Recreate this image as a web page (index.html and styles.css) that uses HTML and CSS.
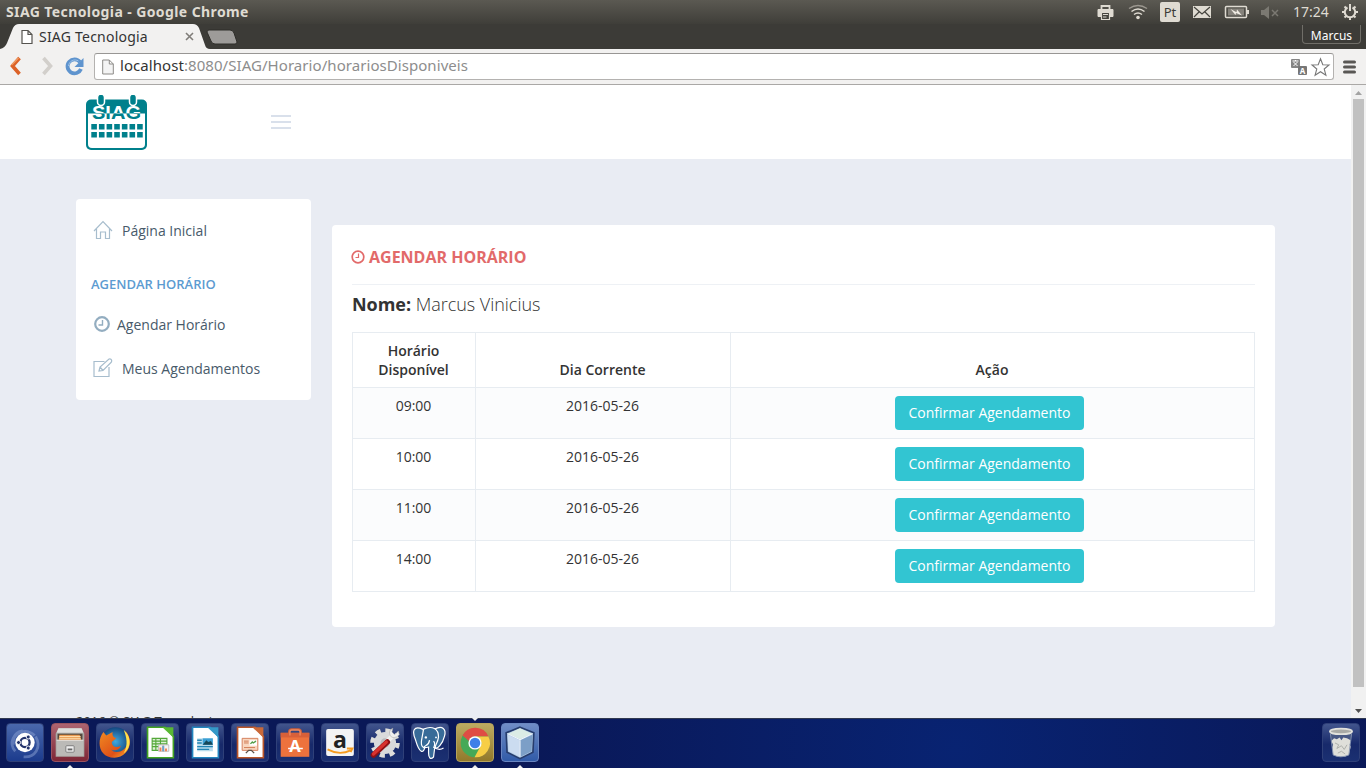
FILE: index.html
```html
<!DOCTYPE html>
<html lang="pt">
<head>
<meta charset="utf-8">
<title>SIAG Tecnologia</title>
<link rel="stylesheet" href="styles.css">
</head>
<body>
<header class="system-bar">
  <span class="window-title">SIAG Tecnologia - Google Chrome</span>
  <svg class="indicators" width="190" height="24" viewBox="0 0 190 24" fill="none" stroke="#dfdbd2" stroke-width="1.5">
    <path d="M6.500 9V6h8v3" stroke-width="1.800"/><path d="M3 9.500h15v7H3z" fill="#dfdbd2" stroke-width="1"/><path d="M6.500 12.500h8v7h-8z" fill="#45443e" stroke-width="1.200"/><path d="M8 14.500h5M8 17h3.500" stroke-width="1"/>
    <g transform="translate(0 .5)"><circle cx="43" cy="17" r="1.800" fill="#dfdbd2" stroke="none"/><path d="M39 14q4-3 8 0M36.500 11q6.500-5 13 0"/><path d="M34 8q9-6 18 0" stroke="#9b978f"/></g>
    <rect x="65" y="2" width="20" height="20" rx="2" fill="#dfdbd2" stroke="none"/><text class="lang" x="75" y="17" text-anchor="middle">Pt</text>
    <rect x="98" y="6" width="18" height="12" fill="#dfdbd2" stroke="none"/><path d="M99 7l8 7 8-7M99 17l5-5m11 5-5-5" stroke="#45443e" stroke-width="1.200"/>
    <rect x="130.500" y="6.500" width="21" height="11" rx="1"/><path d="M153 10v4" stroke-width="2"/><path d="M133 8.500h16v7h-16z" fill="#85827b" stroke="none"/><path d="m135.500 9 6 3.200.5-2.700 5 6-6-2.500-.5 2z" fill="#f0ece4" stroke="none"/>
    <path d="M166 10h3l5-4v13l-5-4h-3z" fill="#7b7972" stroke="none"/><path d="m177 10 6 6m0-6-6 6" stroke="#7b7972"/>
  </svg>
  <span class="clock">17:24</span>
  <svg class="gear" width="18" height="18" viewBox="0 0 18 18" fill="none" stroke="#dfdbd2" stroke-width="2"><path d="M6.500 4.500a5.200 5.200 0 1 0 5 0M9 1v7M1 9h3m10 0h3M3.500 3.500l2 2m9-2-2 2M3.500 14.500l2-2m9 2-2-2M9 14v3"/></svg>
</header>

<div class="tab-strip">
  <div class="tab">
    <svg class="tab-shape" width="211" height="25" viewBox="0 0 211 25"><path d="M0 25q5-1 7-6l6-15q2-4 6-4h174q4 0 6 4l6 17q1 4 5 4z" fill="#f2f1f0"/></svg>
    <div class="tab-content">
      <svg width="12" height="16" viewBox="0 0 12 16"><path d="M1 1.500h6l4 4v9H1zM7 1.500v4h4" fill="#fff" stroke="#55534f" stroke-width="1.200"/></svg>
      <span class="tab-title">SIAG Tecnologia</span>
      <svg class="tab-close" width="9" height="9" viewBox="0 0 9 9"><path d="m1 1 7 7m0-7L1 8" stroke="#807d79" stroke-width="1.600"/></svg>
    </div>
  </div>
  <svg class="new-tab" width="32" height="16" viewBox="0 0 32 16"><path d="M3 1h21q3 0 4 3l3 9q0 2-2 2H9q-3 0-4-3L1 3q0-2 2-2z" fill="#9d9b99" stroke="#2f2e2a"/></svg>
  <div class="profile">Marcus</div>
</div>

<div class="toolbar">
  <svg class="nav-buttons" width="94" height="35" viewBox="0 0 94 35" fill="none">
    <path d="m19.500 9-7 8 7 8" stroke="#dc6227" stroke-width="3.600"/><path d="m18.500 9-7 7" stroke="#f09b62" stroke-width="1.500"/>
    <path d="m43.500 9 7 8-7 8" stroke="#d2cfcb" stroke-width="3.600"/>
    <path d="M80 13A7 7 0 1 0 81 20" stroke="#5f94ce" stroke-width="3.800"/><path d="M83.500 9v9h-9z" fill="#5f94ce"/><path d="M78.500 12a6.500 6.500 0 0 0-10 5" stroke="#9dc1e8"/>
  </svg>
  <div class="omnibox">
    <svg width="12" height="16" viewBox="0 0 12 16"><path d="M.7 1h6.600l4 4v10H.7zM7.300 1v4h4" fill="#f4f4f4" stroke="#8c8a87"/></svg>
    <span class="url"><b>localhost</b>:8080/SIAG/Horario/horariosDisponiveis</span>
    <svg class="page-actions" width="42" height="20" viewBox="0 0 42 20">
      <rect x="1" y="2" width="9" height="9" rx="1" fill="#858585"/><path d="M2.500 4h6M5.500 3v1m-2 5 4-4m-4 0 4 4" stroke="#fff"/>
      <rect x="8" y="9" width="9" height="9" rx="1" fill="#777"/><text x="12.500" y="16.500" text-anchor="middle" class="translate-letter">A</text>
      <path d="m30.500 1.800 2.300 6 6.200.2-4.800 4 1.700 6.200-5.400-3.500-5.400 3.500 1.700-6.200-4.800-4 6.200-.2z" fill="#fff" stroke="#777" stroke-width="1.100"/>
    </svg>
  </div>
  <svg class="menu" width="13" height="14" viewBox="0 0 13 14"><path d="M1.500 2h10m-10 5h10m-10 5h10" stroke="#595754" stroke-width="3" stroke-linecap="round"/></svg>
</div>

<div class="viewport">
  <div class="page">
    <div class="page-header">
      <svg class="logo" width="62" height="57" viewBox="0 0 62 57">
        <defs><clipPath id="upper"><path d="M0 0h62v18.500H0z"/></clipPath><clipPath id="lower"><path d="M0 18.500h62V57H0z"/></clipPath></defs>
        <rect y="4.500" width="61" height="50.500" rx="5" fill="#00808c"/><path d="M2 18.500h57V49q0 4-4 4H6q-4 0-4-4z" fill="#fff"/>
        <g fill="#00808c" stroke="#fff" stroke-width="1.500"><rect x="11.500" y="-1" width="7" height="11.500" rx="3.500"/><rect x="43.500" y="-1" width="7" height="11.500" rx="3.500"/></g>
        <g class="logo-name" text-anchor="middle"><text x="30.500" y="23.500" textLength="49" lengthAdjust="spacingAndGlyphs" fill="#fff" clip-path="url(#upper)">SIAG</text><text x="30.500" y="23.500" textLength="49" lengthAdjust="spacingAndGlyphs" fill="#00808c" clip-path="url(#lower)">SIAG</text></g>
        <path d="M5.300 31.700h52M5.300 39.700h52" stroke="#00808c" stroke-width="5.600" stroke-dasharray="5.600 2.040"/>
      </svg>
      <div class="side-toggle"><i></i><i></i><i></i></div>
    </div>
    <main class="main">
      <nav class="sidebar">
        <a class="home"><svg width="20" height="20" viewBox="0 0 20 20" fill="none" stroke="#a7bdcd" stroke-width="1.200"><path d="m1 11 9-9.500 9 9.500M3.500 9v9.500h4V12h5v6.500h4V9"/></svg>Página Inicial</a>
        <h3>Agendar Horário</h3>
        <a class="schedule"><svg width="16" height="16" viewBox="0 0 16 16" fill="none" stroke="#93adc0"><circle cx="8" cy="8" r="6.800" stroke-width="2.200"/><path d="M8.500 4v5h-4" stroke-width="1.400"/></svg>Agendar Horário</a>
        <a class="mine"><svg width="20" height="20" viewBox="0 0 20 20" fill="none" stroke="#a7bdcd" stroke-width="1.200"><path d="M11.500 3.500H1v15h15V9M6 13l1-4 9-8q2-.5 2.500 1t-.5 2.500L10 12.500zM7 9l3 3.500"/></svg>Meus Agendamentos</a>
      </nav>
      <section class="portlet">
        <h2><svg width="14" height="14" viewBox="0 0 14 14" fill="none" stroke="#e26a6a"><circle cx="7" cy="7" r="5.800" stroke-width="1.700"/><path d="M7.500 3.500v4h-3" stroke-width="1.200"/></svg>Agendar Horário</h2>
        <p class="person"><b>Nome:</b> Marcus Vinicius</p>
        <table>
          <colgroup><col class="col-time"><col class="col-day"><col></colgroup>
          <thead><tr><th>Horário<br>Disponível</th><th>Dia Corrente</th><th>Ação</th></tr></thead>
          <tbody>
            <tr><td>09:00</td><td>2016-05-26</td><td><button>Confirmar Agendamento</button></td></tr>
            <tr><td>10:00</td><td>2016-05-26</td><td><button>Confirmar Agendamento</button></td></tr>
            <tr><td>11:00</td><td>2016-05-26</td><td><button>Confirmar Agendamento</button></td></tr>
            <tr><td>14:00</td><td>2016-05-26</td><td><button>Confirmar Agendamento</button></td></tr>
          </tbody>
        </table>
      </section>
    </main>
    <footer>2016 © SIAG Tecnologia</footer>
  </div>
  <div class="scrollbar">
    <svg width="15" height="14" viewBox="0 0 15 14"><path d="m4 10 3.500-4 3.500 4z" fill="#a3a3a3"/></svg>
    <div class="thumb"></div>
    <svg width="15" height="14" viewBox="0 0 15 14"><path d="m4 5 3.500 4L11 5z" fill="#505050"/></svg>
  </div>
</div>

<footer class="launcher">
  <div class="tile dash"><svg viewBox="0 0 39 39" fill="none"><path d="M7 22C5 9 20 3 30 12M31 13c7 12-1 23-13 22M9 29C1 20 8 8 17 7" stroke="#8ba2d4" stroke-width="3" opacity=".5"/><circle cx="19.500" cy="19.500" r="10.500" fill="#fff"/><circle cx="19.500" cy="19.500" r="5" stroke="#23336b" stroke-width="2.500"/><g fill="#23336b" stroke="#fff"><circle cx="12.500" cy="19.500" r="2.200"/><circle cx="23" cy="13.500" r="2.200"/><circle cx="23" cy="25.500" r="2.200"/></g></svg></div>
  <div class="tile files running"><svg viewBox="0 0 39 39"><path d="M7 4h25l3 6v25H4V10z" fill="#aaa9a5"/><path d="M7 4h25l2 5H5z" fill="#dededb"/><path d="M6 10h27v8H6z" fill="#55483d"/><path d="M8 11h22l2 7H7z" fill="#e99a50"/><path d="M8 13h23M8 15h23" stroke="#ffe0af"/><path d="M5 17h29v17H5z" fill="#bbbab7"/><path d="M5 17h29" stroke="#eee"/><rect x="15" y="23" width="9" height="7" rx="1" fill="#eee" stroke="#777"/><path d="M17 26h5v2h-5z" fill="#666"/></svg></div>
  <div class="tile"><svg viewBox="0 0 39 39"><defs><radialGradient id="globe"><stop stop-color="#40a9df"/><stop offset="1" stop-color="#14477f"/></radialGradient><linearGradient id="fox" x2="1" y2="1"><stop stop-color="#f08b22"/><stop offset=".65" stop-color="#df5118"/><stop offset="1" stop-color="#ffb52c"/></linearGradient></defs><circle cx="20" cy="18.500" r="15.500" fill="url(#globe)"/><path d="M31 7c11 13 1 29-12 29C2 36-1 18 7 8l3 4 7-4c-1 4 1 6 4 7l-5 4c0 5 5 7 10 4-2 5-7 6-11 4 6 6 16 1 18-6 1-5 0-9-2-14z" fill="url(#fox)"/><path d="M29 6c9 7 8 20 0 25 5-9 3-17 0-25z" fill="#ffe04b"/></svg></div>
  <div class="tile"><svg viewBox="0 0 39 39"><path d="M6 3h19l9 10v23H6z" fill="#fff" stroke="#43a421" stroke-width="1.800"/><path d="M22 3h12v11z" fill="#59b833"/><g stroke="#54a83a" stroke-width="1.200" fill="#ddf0d7"><path d="M11 15h16v13H11zM11 18h16M11 21h16M11 24h16M15 15v13M20 15v13"/></g><path d="M18 22h11v7H18z" fill="#f4f4f4" stroke="#bbb"/><path d="M20 25v4m3-6v6m3-3v3" stroke="#ef824e" stroke-width="2"/><path d="M23 23v6" stroke="#62a6d7" stroke-width="2"/></svg></div>
  <div class="tile"><svg viewBox="0 0 39 39"><path d="M6 3h19l9 10v23H6z" fill="#fff" stroke="#2385be" stroke-width="1.800"/><path d="M22 3h12v11z" fill="#3499c8"/><path d="M11 15h17v14H11z" fill="#b9dcec"/><path d="M11 17h5m-5 3h5m-5 4h17m-17 3h13" stroke="#2384b4" stroke-width="1.500"/><path d="M17 15h11v7H17z" fill="#3ba0d5"/><path d="m17 22 4-5 2 2 3-1 2 4z" fill="#174859"/></svg></div>
  <div class="tile"><svg viewBox="0 0 39 39"><path d="M6 3h19l9 10v23H6z" fill="#fff" stroke="#b95528" stroke-width="1.800"/><path d="M22 3h12v11z" fill="#ca6939"/><path d="M11 15h17v13H11z" fill="#f8d6bf" stroke="#d27b55"/><path d="M13 18h5m-5 2h5m-5 5h12" stroke="#ce7650"/><path d="M19 17h8v6h-8z" fill="#fff"/><path d="m20 21 2-2 1 1 3-2" stroke="#539e47" fill="none" stroke-width="1.500"/><path d="m15 31 3-3h3l3 3" stroke="#5d5147" fill="none" stroke-width="1.500"/></svg></div>
  <div class="tile"><svg viewBox="0 0 39 39"><path d="M13 13V8q0-3 3-3h7q3 0 3 3v5" fill="none" stroke="#d05e39" stroke-width="2"/><path d="M4 9h31v26H4z" fill="#ed723d"/><path d="M4 9h31v5H4z" fill="#d86039"/><path d="M14 12V8q0-2 2-2h7q2 0 2 2v4" fill="none" stroke="#ef8a60" stroke-width="1.500"/><text class="bag-letter" x="19.500" y="30" text-anchor="middle">A</text><path d="M12 26h16" stroke="#fff" stroke-width="1.600"/></svg></div>
  <div class="tile"><svg viewBox="0 0 39 39"><rect x="4.500" y="5" width="30" height="29" rx="2" fill="#f4f4f4"/><text class="store-letter" x="19.500" y="25" text-anchor="middle">a</text><path d="M6 27q13 7 25 1m-4-2 6 0-2 4" fill="none" stroke="#f49b20" stroke-width="2"/></svg></div>
  <div class="tile"><svg viewBox="0 0 39 39"><circle cx="19.500" cy="20" r="13.500" fill="none" stroke="#dededb" stroke-width="5" stroke-dasharray="5.500 5.100"/><circle cx="19.500" cy="20" r="12" fill="#d9dadb"/><circle cx="19.500" cy="20" r="5" fill="#b9babd"/><path d="m18 22 11-11" stroke="#f1f1ef" stroke-width="5"/><path d="M28 4q-5 2-3 8 4 5 10-1l-1-4-4 4-3-3z" fill="#eee" stroke="#aaa" stroke-width=".6"/><path d="M7 33 22 19" stroke="#8e1014" stroke-width="6" stroke-linecap="round"/><path d="M7 32 21 19" stroke="#d8322f" stroke-width="3.500" stroke-linecap="round"/></svg></div>
  <div class="tile"><svg viewBox="0 0 39 39"><g transform="translate(-1.500 -1.500) scale(1.080)" fill="#386b98" stroke="#fff" stroke-width="1.200"><path d="M12 6C3 2 1 8 5 17c4 14 8 13 9 8l4-12z"/><path d="M24 6c8-4 12 0 10 7-2 8-7 13-9 12z"/><path d="M13 6c9-4 15 0 15 8-1 6-3 7-4 12l-1 8c-3 3-5 1-5-4v-6c-6 2-8-1-7-7z"/><path d="M19 17c-1 7-5 4-6 8m10-1c4 3 7 3 10 1M23 18c2 2 1 5 0 7" fill="none"/></g><circle cx="15" cy="14" r="1.300" fill="#fff"/><circle cx="26" cy="14" r="1" fill="#fff"/></svg></div>
  <div class="tile chrome running focused"><svg viewBox="0 0 39 39"><circle cx="19.500" cy="20" r="15.500" fill="#46a957"/><path d="M6 12a15.500 15.500 0 0 1 28 1H20a7 7 0 0 0-7 5z" fill="#df4d44"/><path d="M20 13h14a15.500 15.500 0 0 1-15 22.500l7-13q2-6-6-9.500z" fill="#f7ce45"/><circle cx="19.500" cy="20" r="7.200" fill="#fff"/><circle cx="19.500" cy="20" r="5.700" fill="#3f80e8"/></svg></div>
  <div class="tile cube running"><svg viewBox="0 0 39 39"><path d="m19.500 3 15 6-1 21-14 7-14-7-1-21z" fill="#a9c4df" stroke="#263c6d" stroke-width="1.800"/><path d="m19.500 4 13 6-13 6-13-6z" fill="#dbece6"/><path d="m6 11 13 6v18L7 29z" fill="#cbdcf0"/><path d="m20 17 13-6-1 18-12 6z" fill="#7c9fc7"/><path d="m6 10 13.500 6.500L33 10M19.500 17v18" stroke="#f5f9ff" fill="none"/></svg></div>
  <div class="tile trash"><svg viewBox="0 0 39 39"><path d="m8 9 3 24q8 4 17 0l3-24z" fill="#5b6a8c" opacity=".65"/><path d="m9 18 3-3 3 1 3-2 2 3 2-3 4 1 4 2-1 5 1 2-2 9q-8 4-17 0l-1-8 1-3z" fill="#dfdfda"/><path d="m13 20 4 2-2 4 5-3 3 4 3-5m-10 9 4-2 4 3" stroke="#a9aba7" fill="none"/><path d="m8 10 3 23q8 4 17 0l3-23" fill="none" stroke="#8694b1"/><ellipse cx="19.500" cy="7.500" rx="12" ry="3" fill="#a9aaa6" stroke="#e2e2dc" stroke-width="2"/></svg></div>
</footer>
</body>
</html>
```
FILE: styles.css
```css
* { box-sizing: border-box; }
body { margin: 0; width: 1366px; height: 768px; overflow: hidden; display: flex; flex-direction: column; font-family: "Open Sans", sans-serif; font-size: 14px; color: #333; }
svg { display: block; flex: none; }
h2, h3, p { margin: 0; }

.system-bar { height: 24px; flex: none; display: flex; align-items: center; padding: 0 7px 0 6px; background: linear-gradient(#5b5952, #3f3e39); color: #dfdbd2; }
.window-title { font: bold 14px/24px "Noto Sans", sans-serif; letter-spacing: .4px; white-space: nowrap; }
.indicators { margin-left: auto; }
.lang { font: 13px "Noto Sans", sans-serif; fill: #3c3b37; stroke: none; }
.clock { font: 14px/24px "Noto Sans", sans-serif; width: 37px; margin: 0 11px 0 8px; }

.tab-strip { height: 25px; flex: none; display: flex; background: #3c3b37; }
.tab { display: grid; width: 211px; }
.tab-shape, .tab-content { grid-area: 1 / 1; }
.tab-content { display: flex; align-items: center; padding: 0 17px 0 21px; z-index: 1; }
.tab-title { font: 14px/24px "Noto Sans", sans-serif; letter-spacing: .22px; margin-left: 6px; white-space: nowrap; }
.tab-close { margin-left: auto; }
.new-tab { margin: 5px 0 0 -5px; }
.profile { margin: 1px 5px 0 auto; width: 59px; height: 19px; border: 1px solid #706e68; border-top: 0; border-radius: 0 0 4px 4px; color: #fff; font: 12px/21px "Noto Sans", sans-serif; text-align: center; }

.toolbar { height: 36px; flex: none; display: flex; align-items: center; background: #f2f1f0; border-bottom: 1px solid #aaa8a6; }
.omnibox { width: 1240px; height: 27px; display: flex; align-items: center; padding: 0 1px 0 7px; border: 1px solid #b4b2b0; border-top-color: #989694; border-radius: 3px; background: #fff; }
.url { margin: 0 0 2px 6px; font: 15px/23px "Noto Sans", sans-serif; letter-spacing: .06px; color: #8d8d8d; white-space: nowrap; }
.url b { font-weight: 400; color: #333; }
.page-actions { margin-left: auto; }
.translate-letter { font: bold 8px "Noto Sans", sans-serif; fill: #fff; }
.menu { margin-left: 9px; }

.viewport { height: 633px; flex: none; display: flex; background: #e9ecf3; overflow: hidden; }
.page { width: 1351px; height: 633px; overflow: hidden; }
.page-header { height: 74px; display: flex; align-items: flex-start; padding: 10px 0 0 86px; background: #fff; }
.logo-name { font: bold 18px "Liberation Sans", sans-serif; }
.side-toggle { display: flex; flex-direction: column; gap: 4px; margin: 20px 0 0 123px; width: 20px; }
.side-toggle i { height: 2px; background: #d9e0eb; }
.main { display: flex; align-items: flex-start; gap: 21px; padding: 40px 76px 0; height: 547px; }
.sidebar { width: 235px; height: 201px; padding: 11px 15px; border-radius: 4px; background: #fff; }
.sidebar a { display: flex; align-items: center; height: 40px; padding-left: 2px; color: #485a6a; }
.sidebar .home svg, .sidebar .mine svg { margin-right: 9px; }
.sidebar .schedule { padding-left: 3px; }
.sidebar .schedule svg { margin-right: 7px; }
.sidebar h3 { margin: 25px 0 11px; font-size: 13px; line-height: 18px; font-weight: 600; color: #5c9bd1; text-transform: uppercase; }
.sidebar .mine { margin-top: 4px; }
.portlet { width: 943px; height: 402px; margin-top: 26px; padding: 12px 20px 0; border-radius: 4px; background: #fff; }
.portlet h2 { display: flex; align-items: center; gap: 4px; height: 48px; padding-bottom: 8px; border-bottom: 1px solid #eef1f5; color: #e26a6a; font-size: 16px; font-weight: 700; text-transform: uppercase; }
.portlet h2 svg { margin-left: -1px; }
.person { margin: 7px 0 15px; font-size: 18px; line-height: 25px; font-weight: 300; letter-spacing: -.03px; }
.person b { font-weight: 700; }
table { width: 903px; table-layout: fixed; border-collapse: collapse; text-align: center; line-height: 20px; }
.col-time { width: 123px; }
.col-day { width: 255px; }
th, td { border: 1px solid #e7ecf1; padding: 8px 9px 8px 8px; vertical-align: top; }
th { height: 55px; line-height: 19px; font-weight: 600; vertical-align: bottom; }
td { height: 51px; }
tbody tr:nth-child(odd) { background: #fbfcfd; }
button { display: block; width: 189px; height: 34px; margin: 0 0 0 156px; padding: 0; border: 0; border-radius: 4px; background: #32c5d2; color: #fff; font: 14px/20px "Open Sans", sans-serif; }
.page footer { padding: 5px 76px 0; font-size: 13px; line-height: 20px; letter-spacing: -.05px; }
.scrollbar { width: 15px; display: flex; flex-direction: column; background: #f1f1f1; }
.thumb { width: 11px; height: 588px; margin: 0 auto; background: #c1c1c1; }
.scrollbar svg:last-child { margin-top: auto; }

.launcher { height: 50px; flex: none; display: flex; align-items: flex-start; gap: 7px; padding: 4px 6px 0; border-top: 1px solid #303950; background: radial-gradient(circle at 70% 60%, #082372, transparent 45%), #0a1857; }
.tile { width: 38px; height: 39px; flex: none; position: relative; border: 1px solid #2f4078; border-radius: 4px; background: linear-gradient(#42558d, #17296a 55%, #1b3072); }
.tile svg { width: 36px; height: 37px; }
.dash { background: linear-gradient(#4a68ac, #1c3b8d); }
.files { background: linear-gradient(#ad6470, #7d2636); border-color: #99525f; }
.chrome { background: linear-gradient(#bcab61, #92792b); border-color: #b6a35b; }
.cube { background: linear-gradient(#708dc6, #315ba8); border-color: #6985bf; }
.trash { margin-left: auto; }
.running::after, .focused::before { content: ""; position: absolute; left: 15px; border: 3px solid transparent; }
.running::after { bottom: -7px; border-bottom-color: #eee; }
.focused::before { top: -6px; border-top-color: #eee; }
.bag-letter { font: bold 18px "Noto Sans", sans-serif; fill: #fff; }
.store-letter { font: bold 25px "Open Sans", sans-serif; fill: #222; }
```
